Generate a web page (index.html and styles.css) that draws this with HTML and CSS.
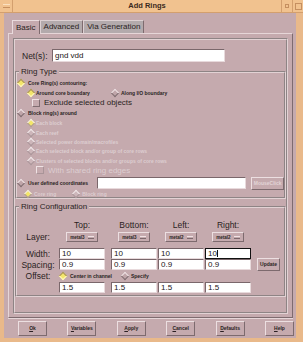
FILE: index.html
```html
<!DOCTYPE html>
<html lang="en">
<head>
    <meta charset="UTF-8">
    <title>Add Rings</title>
    <link rel="stylesheet" href="styles.css">
</head>
<body>
<div class="window">
    <div class="titlebar">
        <span class="win-menu"><i></i></span>
        <span class="title">Add Rings</span>
        <span class="win-btn"><i class="dot"></i></span>
        <span class="win-btn"><i class="box"></i></span>
    </div>

    <div class="body">
        <div class="tabs">
            <div class="tab active">Basic</div>
            <div class="tab">Advanced</div>
            <div class="tab">Via Generation</div>
        </div>

        <div class="panel">
            <div class="frame">
                <div class="net-row">
                    <span class="label">Net(s):</span>
                    <div class="input net">gnd vdd</div>
                </div>

                <fieldset class="group ring-type">
                    <legend>Ring Type</legend>
                    <div class="row r1"><span class="radio on"></span><span class="small">Core Ring(s) contouring:</span></div>
                    <div class="row r2">
                        <span class="radio on ind1"></span><span class="small">Around core boundary</span>
                        <span class="radio along"></span><span class="small">Along I/O boundary</span>
                    </div>
                    <div class="row r3"><span class="check"></span><span class="big">Exclude selected objects</span></div>
                    <div class="row r4"><span class="radio"></span><span class="small">Block ring(s) around</span></div>
                    <div class="row r5 off"><span class="radio on ind1"></span><span class="small">Each block</span></div>
                    <div class="row r6 off"><span class="radio ind1"></span><span class="small">Each reef</span></div>
                    <div class="row r7 off"><span class="radio ind1"></span><span class="small">Selected power domain/macrofiles</span></div>
                    <div class="row r8 off"><span class="radio ind1"></span><span class="small">Each selected block and/or group of core rows</span></div>
                    <div class="row r9 off"><span class="radio ind1"></span><span class="small">Clusters of selected blocks and/or groups of core rows</span></div>
                    <div class="row r10 off"><span class="check ind2"></span><span class="big">With shared ring edges</span></div>
                    <div class="row r11">
                        <span class="radio"></span><span class="small">User defined coordinates</span>
                        <div class="input coords"></div>
                        <div class="btn mouse">MouseClick</div>
                    </div>
                    <div class="row r12 off">
                        <span class="radio on core"></span><span class="small">Core ring</span>
                        <span class="radio block"></span><span class="small">Block ring</span>
                    </div>
                </fieldset>

                <fieldset class="group ring-config">
                    <legend>Ring Configuration</legend>
                    <div class="grid">
                        <span></span>
                        <span class="head">Top:</span>
                        <span class="head">Bottom:</span>
                        <span class="head">Left:</span>
                        <span class="head">Right:</span>
                        <span></span>

                        <span class="label">Layer:</span>
                        <span class="cell"><span class="option">metal3 <i></i></span></span>
                        <span class="cell"><span class="option">metal3 <i></i></span></span>
                        <span class="cell"><span class="option">metal2 <i></i></span></span>
                        <span class="cell"><span class="option">metal2 <i></i></span></span>
                        <span></span>

                        <span class="label">Width:</span>
                        <div class="input val">10</div>
                        <div class="input val">10</div>
                        <div class="input val">10</div>
                        <div class="input val focus">10<b class="caret"></b></div>
                        <span></span>

                        <span class="label">Spacing:</span>
                        <div class="input val">0.9</div>
                        <div class="input val">0.9</div>
                        <div class="input val">0.9</div>
                        <div class="input val">0.9</div>
                        <div class="btn update">Update</div>

                        <span class="label">Offset:</span>
                        <div class="offset-opts">
                            <span class="radio on"></span><span class="small">Center in channel</span>
                            <span class="radio spec"></span><span class="small">Specify</span>
                        </div>

                        <span></span>
                        <div class="input val">1.5</div>
                        <div class="input val">1.5</div>
                        <div class="input val">1.5</div>
                        <div class="input val">1.5</div>
                        <span></span>
                    </div>
                </fieldset>
            </div>
        </div>

        <div class="footer">
            <div class="btn act"><u>O</u>k</div>
            <div class="btn act"><u>V</u>ariables</div>
            <div class="btn act"><u>A</u>pply</div>
            <div class="btn act"><u>C</u>ancel</div>
            <div class="btn act"><u>D</u>efaults</div>
            <div class="btn act"><u>H</u>elp</div>
        </div>
    </div>
</div>
</body>
</html>
```

FILE: styles.css
```css
body {
    margin: 0;
    background-color: #e9b98a;
    font-family: "Liberation Sans", Arial, sans-serif;
    color: #2a1f22;
}
.window {
    width: 303px;
    height: 342px;
    display: flex;
    flex-direction: column;
}
.titlebar {
    height: 13px;
    box-sizing: border-box;
    background-color: #f1c28f;
    border-bottom: 1px solid #d39f6e;
    display: flex;
    align-items: stretch;
}
.win-menu {
    width: 12px;
    border-right: 1px solid #d39f6e;
    display: flex;
    align-items: center;
    justify-content: center;
}
.win-menu i {
    width: 7px;
    height: 2px;
    border-top: 1px solid #fbe0bf;
    border-bottom: 1px solid #c58f60;
}
.title {
    flex: 1;
    text-align: center;
    font-size: 7.5px;
    font-weight: bold;
    line-height: 12px;
    color: #3a2a20;
}
.win-btn {
    width: 10px;
    border-left: 1px solid #d39f6e;
    display: flex;
    align-items: center;
    justify-content: center;
}
.win-btn .dot {
    width: 2px;
    height: 2px;
    border: 1px solid #c58f60;
}
.win-btn .box {
    width: 5px;
    height: 5px;
    border: 1px solid #c58f60;
}
.body {
    flex: 1;
    margin: 0 7px 4px 4px;
    background-color: #c5aaae;
    padding: 6px 3px 0 4px;
    display: flex;
    flex-direction: column;
}
.tabs {
    display: flex;
    align-items: flex-end;
    height: 14px;
    padding-left: 4px;
}
.tab {
    font-size: 8px;
    line-height: 12px;
    height: 13px;
    box-sizing: border-box;
    padding: 0 3px;
    background-color: #b3aaac;
    border-top: 1px solid #ddd0d2;
    border-left: 1px solid #ddd0d2;
    border-right: 1px solid #7e6b6f;
}
.tab.active {
    background-color: #c5aaae;
    height: 14px;
    border-top-color: #eadbdd;
    border-left-color: #eadbdd;
    padding: 1px 3px 0;
    position: relative;
    z-index: 1;
    margin-bottom: -1px;
}
.panel {
    height: 285px;
    box-sizing: border-box;
    border-top: 1px solid #e6d6d8;
    border-left: 1px solid #e6d6d8;
    border-right: 1px solid #7e6b6f;
    border-bottom: 1px solid #7e6b6f;
    padding: 4px 4px 2px 4px;
}
.frame {
    height: 276px;
    box-sizing: border-box;
    border: 2px groove #e2d2d4;
}
.net-row {
    display: flex;
    align-items: center;
    height: 13px;
    margin-top: 9px;
}
.label {
    font-size: 8.5px;
    color: #2a1f22;
}
.net-row .label {
    margin-left: 7px;
    width: 30px;
}
.input {
    background-color: #fff;
    box-sizing: border-box;
    border-top: 1px solid #7a676b;
    border-left: 1px solid #7a676b;
    border-bottom: 1px solid #e8dadc;
    border-right: 1px solid #e8dadc;
    font-size: 8px;
    line-height: 11px;
    padding-left: 2px;
    color: #1a1416;
}
.input.net {
    width: 173px;
    height: 13px;
}
.group {
    margin: 0;
    padding: 0;
    border: 2px groove #e2d2d4;
    min-width: 0;
}
.group legend {
    font-size: 8px;
    line-height: 10px;
    padding: 0 2px;
    margin-left: 2px;
    color: #2a1f22;
}
.ring-type {
    margin-top: 5px;
    padding-top: 1px;
}
.row {
    display: flex;
    align-items: center;
}
.r1 { height: 10px; }
.r2 { height: 9px; }
.r3 { height: 11px; }
.r4 { height: 10px; }
.r5 { height: 10px; }
.r6 { height: 9px; }
.r7 { height: 9px; }
.r8 { height: 10px; }
.r9 { height: 9px; }
.r10 { height: 10px; }
.r11 { height: 16px; }
.r12 { height: 6px; }
.small {
    font-size: 5px;
    font-weight: bold;
    white-space: nowrap;
}
.big {
    font-size: 8px;
    white-space: nowrap;
}
.off .small, .off .big {
    color: #ddced1;
}
.radio {
    width: 4px;
    height: 4px;
    flex: none;
    transform: rotate(45deg);
    background-color: #bfa5a9;
    border-top: 1px solid #efe2e4;
    border-left: 1px solid #efe2e4;
    border-right: 1px solid #806d71;
    border-bottom: 1px solid #806d71;
    margin: 0 4px 0 1px;
}
.radio.on {
    background-color: #f3e66a;
    border-top-color: #a68f5a;
    border-left-color: #a68f5a;
    border-right-color: #fff6c0;
    border-bottom-color: #fff6c0;
}
.off .radio {
    background-color: #cdb6ba;
    border-top-color: #f0e6e8;
    border-left-color: #f0e6e8;
    border-right-color: #a99498;
    border-bottom-color: #a99498;
}
.off .radio.on {
    background-color: #f3e66a;
}
.radio.ind1 {
    margin-left: 11px;
    margin-right: 2px;
}
.radio.along {
    margin-left: 22px;
    margin-right: 3px;
}
.check {
    width: 6px;
    height: 6px;
    flex: none;
    margin: 0 4px 0 15px;
    background-color: #c5aaae;
    border-top: 1px solid #efe2e4;
    border-left: 1px solid #efe2e4;
    border-right: 1px solid #806d71;
    border-bottom: 1px solid #806d71;
}
.off .check {
    border-right-color: #a99498;
    border-bottom-color: #a99498;
}
.check.ind2 {
    margin-left: 19px;
}
.input.coords {
    width: 151px;
    height: 12px;
    margin-left: 9px;
}
.btn {
    box-sizing: border-box;
    background-color: #c5aaae;
    border-top: 1px solid #ecdfe1;
    border-left: 1px solid #ecdfe1;
    border-right: 1px solid #7d6a6e;
    border-bottom: 1px solid #7d6a6e;
    font-size: 5px;
    font-weight: bold;
    text-align: center;
    white-space: nowrap;
}
.btn.mouse {
    width: 33px;
    height: 13px;
    line-height: 11px;
    margin-left: 5px;
    color: #e2d4d6;
}
.radio.core {
    margin-left: 8px;
    margin-right: 3px;
}
.radio.block {
    margin-left: 17px;
    margin-right: 3px;
}
.ring-config {
    margin-top: 3px;
    padding: 6px 0 2px 0;
}
.grid {
    display: grid;
    grid-template-columns: 42px 52px 47px 47px 49px auto;
    grid-template-rows: 13px 17px 11px 11px 12px 11px;
    align-items: center;
}
.grid .label {
    text-align: center;
}
.head {
    width: 46px;
    text-align: center;
    font-size: 8.5px;
}
.cell {
    width: 46px;
    display: flex;
    justify-content: center;
    align-self: start;
    margin-top: 1px;
}
.grid .label:nth-child(7) {
    align-self: start;
    line-height: 13px;
}
.option {
    height: 10px;
    padding: 0 3px;
    box-sizing: border-box;
    display: flex;
    align-items: center;
    gap: 3px;
    font-size: 4.5px;
    font-weight: bold;
    background-color: #c5aaae;
    border-top: 1px solid #ecdfe1;
    border-left: 1px solid #ecdfe1;
    border-right: 1px solid #7d6a6e;
    border-bottom: 1px solid #7d6a6e;
}
.option i {
    width: 6px;
    height: 1px;
    border-top: 1px solid #efe2e4;
    border-bottom: 1px solid #7d6a6e;
}
.input.val {
    width: 46px;
    height: 11px;
    line-height: 9px;
}
.input.focus {
    border: 1px solid #111;
}
.caret {
    display: inline-block;
    width: 1px;
    height: 7px;
    background-color: #111;
    vertical-align: middle;
}
.btn.update {
    width: 23px;
    height: 13px;
    line-height: 11px;
    margin-left: 3px;
}
.offset-opts {
    grid-column: 2 / 7;
    display: flex;
    align-items: center;
}
.offset-opts .radio.on {
    margin-left: 1px;
}
.radio.spec {
    margin-left: 10px;
    margin-right: 3px;
}
.footer {
    flex: 1;
    display: grid;
    grid-template-columns: repeat(5, 49.4px) 1fr;
    align-items: center;
    padding-left: 10px;
    border-top: 1px solid #e6d6d8;
}
.btn.act {
    width: 29px;
    height: 15px;
    line-height: 13px;
}
.btn u {
    text-decoration: underline;
}
```
